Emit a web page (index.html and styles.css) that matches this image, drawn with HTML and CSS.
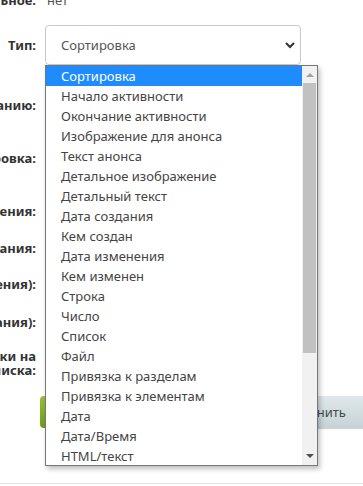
FILE: index.html
```html
<!DOCTYPE html>
<html lang="ru">
<head>
    <meta charset="UTF-8">
    <meta name="viewport" content="width=device-width, initial-scale=1.0">
    <title>Свойство инфоблока</title>
    <link rel="stylesheet" href="styles.css">
</head>
<body>
    <div class="form">
        <div class="label">Обязательное:</div>
        <div class="value">нет</div>

        <div class="label">Тип:</div>
        <div class="field">
            <div class="select-wrap">
                <div class="select">
                    <span>Сортировка</span>
                    <svg class="chevron" width="10" height="7" viewBox="0 0 10 7"><polyline points="1,1 5,5 9,1" fill="none" stroke="#333" stroke-width="2"/></svg>
                </div>

                <!-- open list of the select -->
                <div class="dropdown">
                    <ul class="options">
                        <li class="selected">Сортировка</li>
                        <li>Начало активности</li>
                        <li>Окончание активности</li>
                        <li>Изображение для анонса</li>
                        <li>Текст анонса</li>
                        <li>Детальное изображение</li>
                        <li>Детальный текст</li>
                        <li>Дата создания</li>
                        <li>Кем создан</li>
                        <li>Дата изменения</li>
                        <li>Кем изменен</li>
                        <li>Строка</li>
                        <li>Число</li>
                        <li>Список</li>
                        <li>Файл</li>
                        <li>Привязка к разделам</li>
                        <li>Привязка к элементам</li>
                        <li>Дата</li>
                        <li>Дата/Время</li>
                        <li>HTML/текст</li>
                    </ul>
                    <div class="scrollbar">
                        <div class="arrow up"></div>
                        <div class="thumb"></div>
                        <div class="arrow down"></div>
                    </div>
                </div>
            </div>
        </div>

        <div class="label">Значение по умолчанию:</div>
        <div class="field"><input class="input" type="text"></div>

        <div class="label">Сортировка:</div>
        <div class="field"><input class="input" type="text" value="500"></div>

        <div class="label">Дата изменения:</div>
        <div class="field"></div>

        <div class="label">Дата создания:</div>
        <div class="field"></div>

        <div class="label">Кем изменен (для изменения):</div>
        <div class="field"></div>

        <div class="label">Кем создан (для создания):</div>
        <div class="field"></div>

        <div class="label">Показывать ссылки на<br>странице списка:</div>
        <div class="field"></div>

        <div class="buttons">
            <button class="btn btn-green">Сохранить</button>
            <button class="btn btn-gray">Применить</button>
            <button class="btn btn-gray">Отменить</button>
        </div>
    </div>
    <div class="footer"></div>
</body>
</html>
```

FILE: styles.css
```css
body {
    margin: 0;
    background: #fff;
    font-family: "Noto Sans", "Open Sans", sans-serif;
    font-size: 13px;
    color: #333;
    overflow: hidden;
    height: 486px;
}

.form {
    display: grid;
    grid-template-columns: 300px 256px;
    grid-template-rows: 20px 70px 50px 56px 50px 24px 48px 28px 54px 44px;
    column-gap: 9px;
    align-items: center;
    margin-left: -264px;
    margin-top: -10px;
    width: 800px;
}

.label {
    font-weight: bold;
    text-align: right;
    white-space: nowrap;
    line-height: 14px;
    color: #333;
}

.value {
    color: #555;
    padding-left: 2px;
}

.select-wrap {
    position: relative;
}

.select {
    height: 40px;
    box-sizing: border-box;
    border: 1px solid #c9c9c9;
    border-radius: 4px;
    padding: 0 5px 0 15px;
    display: flex;
    align-items: center;
    justify-content: space-between;
    color: #555;
    background: #fff;
}

.input {
    width: 100%;
    height: 30px;
    box-sizing: border-box;
    border: 1px solid #c9c9c9;
    border-radius: 4px;
}

/* the opened list, lies over the form */
.dropdown {
    position: absolute;
    top: 100%;
    left: 0;
    width: 273px;
    height: 401px;
    box-sizing: border-box;
    border: 1px solid #777;
    background: #fff;
    box-shadow: 2px 3px 5px rgba(0, 0, 0, 0.25);
    display: flex;
    z-index: 10;
}

.options {
    list-style: none;
    margin: 0;
    padding: 0;
    flex: 1;
}

.options li {
    height: 20px;
    line-height: 20px;
    padding-left: 15px;
    color: #444;
    white-space: nowrap;
}

.options li.selected {
    background: #1e8cff;
    color: #fff;
}

.scrollbar {
    width: 15px;
    background: #f1f1f1;
    display: flex;
    flex-direction: column;
    align-items: center;
}

.thumb {
    width: 13px;
    height: 270px;
    background: #c1c1c1;
}

.arrow {
    width: 0;
    height: 0;
    border-left: 4px solid transparent;
    border-right: 4px solid transparent;
    margin: 7px 0;
}

.arrow.up {
    border-bottom: 4px solid #a3a3a3;
    margin-bottom: 6px;
}

.arrow.down {
    border-top: 4px solid #505050;
    margin-top: auto;
    margin-bottom: 7px;
}

.buttons {
    grid-column: 1 / -1;
    display: flex;
    gap: 8px;
    padding-left: 304px;
}

.btn {
    flex-shrink: 0;
    height: 32px;
    border-radius: 4px;
    font-family: inherit;
    font-size: 13px;
    padding: 0 30px;
    border: none;
    white-space: nowrap;
}

.btn-green {
    width: 196px;
    background: linear-gradient(#97c23a, #6e9c12);
    color: #fff;
    font-weight: bold;
}

.btn-gray {
    background: linear-gradient(#dfe8ea, #c6d3d6);
    color: #3f4b4e;
    box-shadow: 0 1px 1px rgba(0, 0, 0, 0.2);
}

.footer {
    margin-top: 49px;
    border-top: 1px solid #e4e4e4;
}
```
